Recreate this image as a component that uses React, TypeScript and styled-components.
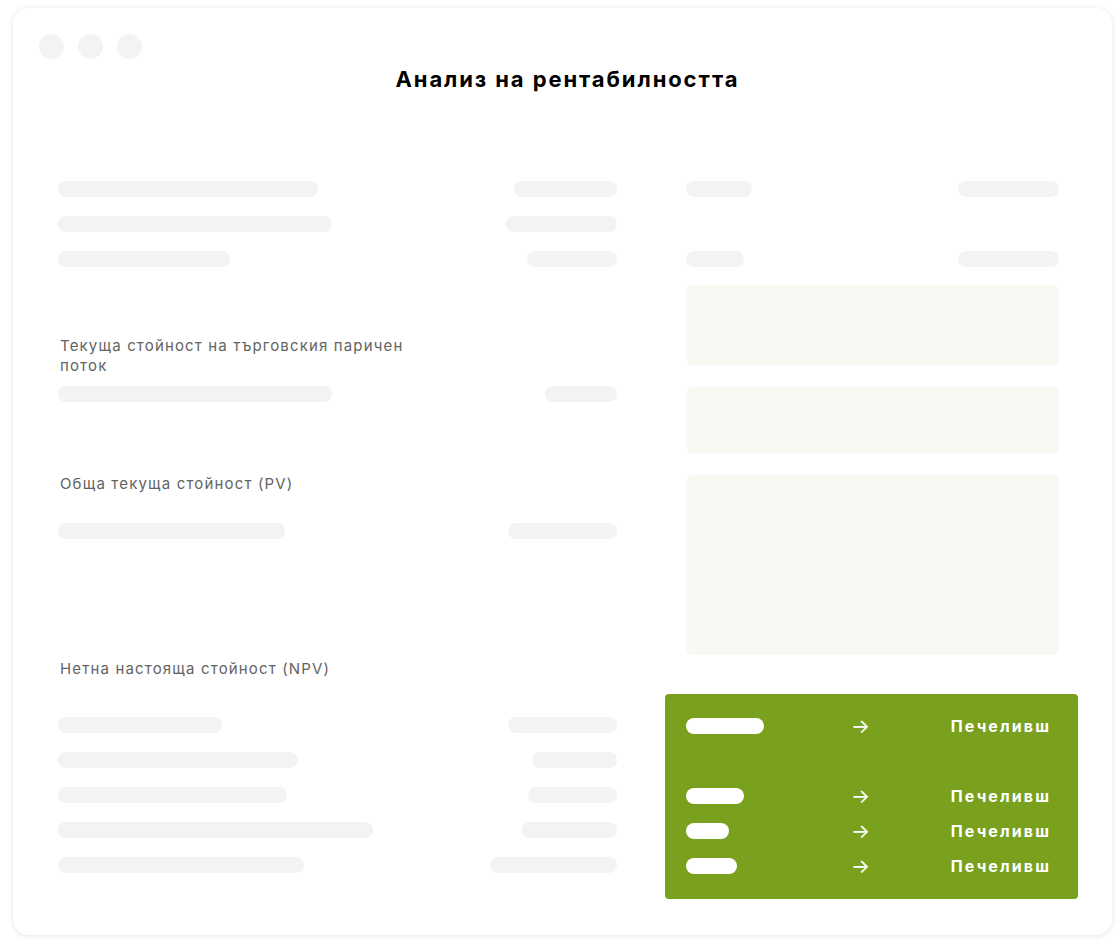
import styled, { createGlobalStyle } from 'styled-components';

const GlobalStyle = createGlobalStyle`
  html, body {
    margin: 0;
    padding: 0;
    background: #ffffff;
    font-family: Inter, "Noto Sans", sans-serif;
  }
`;

const Page = styled.div`
  padding: 8px 8px 13px 13px;
  box-sizing: border-box;
  width: 1120px;
`;

const Window = styled.div`
  background: #ffffff;
  border-radius: 16px;
  box-shadow: 0 0 6px rgba(0, 0, 0, 0.08), 0 2px 4px rgba(0, 0, 0, 0.04);
  height: 927px;
  box-sizing: border-box;
  padding: 26px 53px 0 45px;
`;

const Dots = styled.div`
  display: flex;
  gap: 14px;
  margin-left: -19px;
`;

const Dot = styled.span`
  width: 25px;
  height: 25px;
  border-radius: 50%;
  background: #f3f3f3;
`;

const Title = styled.h1`
  margin: 5px 0 0;
  text-align: center;
  font-size: 22px;
  line-height: 30px;
  font-weight: 700;
  color: #000000;
  letter-spacing: 1.9px;
  padding-left: 18px;
`;

const Columns = styled.div`
  display: grid;
  grid-template-columns: 559px 373px;
  column-gap: 69px;
  margin-top: 87px;
`;

const Column = styled.div`
  display: flex;
  flex-direction: column;
`;

const Rows = styled.div`
  display: flex;
  flex-direction: column;
  gap: 19px;
`;

const BarRow = styled.div`
  display: flex;
  justify-content: space-between;
  align-items: center;
  height: 16px;
`;

const Bar = styled.span<{ $w: number; $light?: boolean }>`
  display: block;
  width: ${(p) => p.$w}px;
  height: 16px;
  border-radius: 8px;
  background: ${(p) => (p.$light ? '#ffffff' : '#f3f3f3')};
`;

const Label = styled.div<{ $top: number; $bottom: number }>`
  margin-top: ${(p) => p.$top}px;
  margin-bottom: ${(p) => p.$bottom}px;
  max-width: 370px;
  font-size: 15px;
  line-height: 20px;
  color: #636363;
  letter-spacing: 1.15px;
  padding-left: 2px;
`;

const Spacer = styled.div`
  height: 16px;
`;

const Placeholder = styled.div<{ $h: number }>`
  height: ${(p) => p.$h}px;
  border-radius: 6px;
  background: #f7f9f2;
`;

const Boxes = styled.div`
  display: flex;
  flex-direction: column;
  gap: 22px;
  margin-top: 18px;
`;

const ResultPanel = styled.div`
  margin: 39px -19px 0 -21px;
  padding: 24px 19px 25px 21px;
  background: #79a11d;
  border-radius: 4px;
  display: flex;
  flex-direction: column;
  gap: 19px;
`;

const ResultRow = styled.div`
  display: grid;
  grid-template-columns: 165px 1fr auto;
  align-items: center;
  height: 16px;
  padding-right: 8px;
  color: #ffffff;
`;

const Arrow = styled.span`
  font-size: 20px;
  line-height: 16px;
`;

const Verdict = styled.span`
  font-size: 16px;
  font-weight: 700;
  line-height: 16px;
  letter-spacing: 2.1px;
`;

const leftTop = [
  [260, 103],
  [274, 111],
  [172, 90],
];

const leftBottom = [
  [164, 109],
  [240, 85],
  [229, 89],
  [315, 95],
  [246, 127],
];

const results: (number | null)[] = [78, null, 58, 43, 51];

export default function App() {
  return (
    <>
      <GlobalStyle />
      <Page>
        <Window>
          <Dots>
            <Dot />
            <Dot />
            <Dot />
          </Dots>
          <Title>Анализ на рентабилността</Title>
          <Columns>
            <Column>
              <Rows>
                {leftTop.map(([a, b], i) => (
                  <BarRow key={i}>
                    <Bar $w={a} />
                    <Bar $w={b} />
                  </BarRow>
                ))}
              </Rows>
              <Label $top={69} $bottom={10}>
                Текуща стойност на търговския паричен поток
              </Label>
              <BarRow>
                <Bar $w={274} />
                <Bar $w={72} />
              </BarRow>
              <Label $top={72} $bottom={29}>
                Обща текуща стойност (PV)
              </Label>
              <BarRow>
                <Bar $w={227} />
                <Bar $w={109} />
              </BarRow>
              <Label $top={120} $bottom={38}>
                Нетна настояща стойност (NPV)
              </Label>
              <Rows>
                {leftBottom.map(([a, b], i) => (
                  <BarRow key={i}>
                    <Bar $w={a} />
                    <Bar $w={b} />
                  </BarRow>
                ))}
              </Rows>
            </Column>
            <Column>
              <Rows>
                <BarRow>
                  <Bar $w={66} />
                  <Bar $w={101} />
                </BarRow>
                <Spacer />
                <BarRow>
                  <Bar $w={58} />
                  <Bar $w={101} />
                </BarRow>
              </Rows>
              <Boxes>
                <Placeholder $h={80} />
                <Placeholder $h={66} />
                <Placeholder $h={180} />
              </Boxes>
              <ResultPanel>
                {results.map((w, i) =>
                  w === null ? (
                    <Spacer key={i} />
                  ) : (
                    <ResultRow key={i}>
                      <Bar $w={w} $light />
                      <Arrow>→</Arrow>
                      <Verdict>Печеливш</Verdict>
                    </ResultRow>
                  )
                )}
              </ResultPanel>
            </Column>
          </Columns>
        </Window>
      </Page>
    </>
  );
}
